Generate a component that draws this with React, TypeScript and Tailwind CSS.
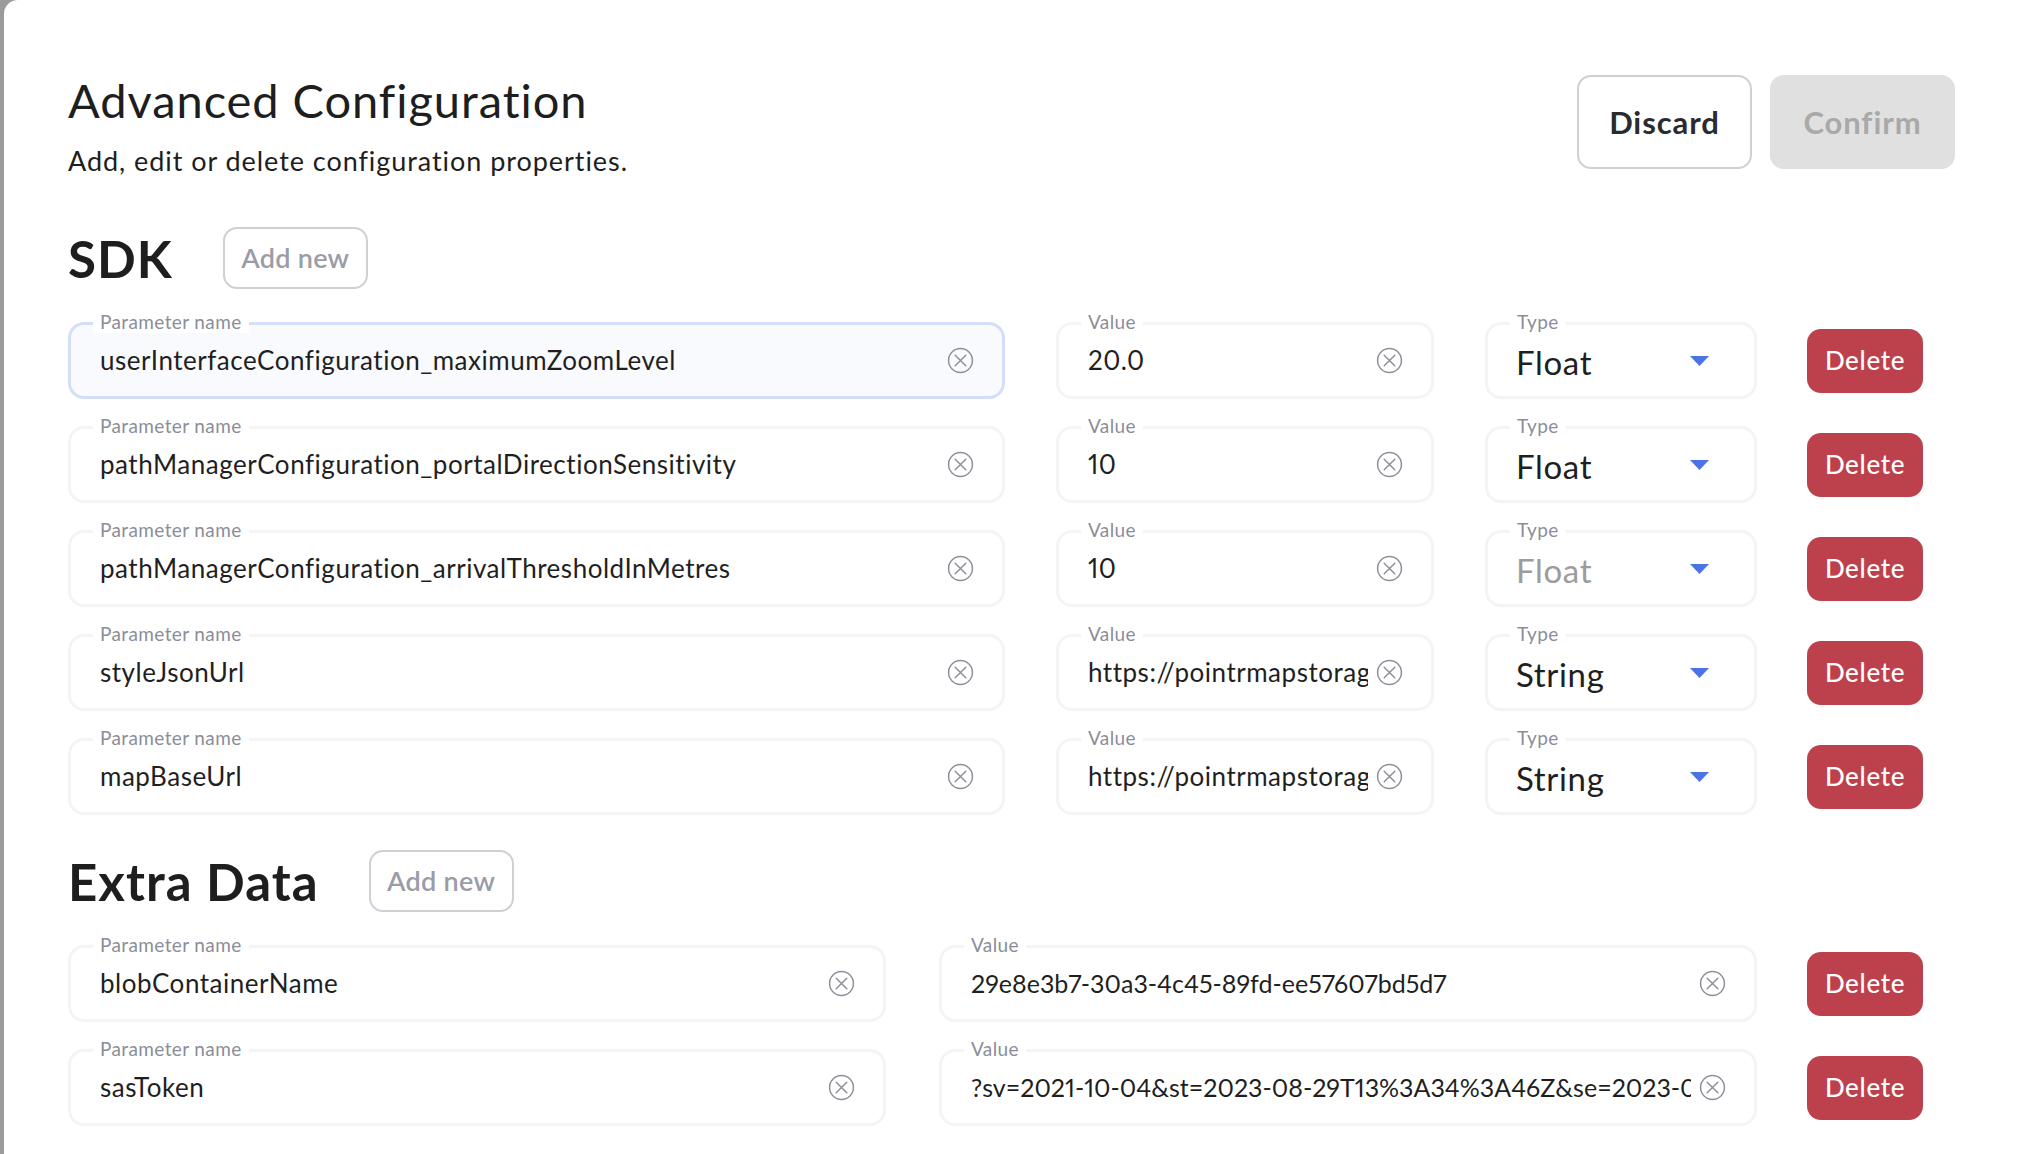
import React from 'react';

const sdkRows = [
  { name: 'userInterfaceConfiguration_maximumZoomLevel', value: '20.0', type: 'Float', focused: true },
  { name: 'pathManagerConfiguration_portalDirectionSensitivity', value: '10', type: 'Float' },
  { name: 'pathManagerConfiguration_arrivalThresholdInMetres', value: '10', type: 'Float', disabled: true },
  { name: 'styleJsonUrl', value: 'https://pointrmapstorage.blob.core.windows.net/styles/style.json', type: 'String' },
  { name: 'mapBaseUrl', value: 'https://pointrmapstorage.blob.core.windows.net/maps/', type: 'String' },
];

const extraRows = [
  { name: 'blobContainerName', value: '29e8e3b7-30a3-4c45-89fd-ee57607bd5d7' },
  {
    name: 'sasToken',
    value: '?sv=2021-10-04&st=2023-08-29T13%3A34%3A46Z&se=2023-08-30T13%3A34%3A46Z&sr=c&sp=rl',
  },
];

function ClearIcon() {
  return (
    <svg width="27" height="27" viewBox="0 0 24 24" fill="none" stroke="#8d8e99" strokeWidth="1.3" strokeLinecap="round" className="shrink-0">
      <circle cx="12" cy="12" r="10.6" />
      <path d="M7.3 7.3l9.4 9.4M16.7 7.3l-9.4 9.4" />
    </svg>
  );
}

function FloatingLabel({ children }: { children: React.ReactNode }) {
  return (
    <span className="absolute left-[22px] -top-[15px] bg-white px-[7px] text-[19px] leading-[23px] tracking-[0.02em] text-[#8b8d99]">
      {children}
    </span>
  );
}

function Field({
  label,
  value,
  focused,
  width,
  textClass = 'text-[26px] tracking-[0.02em]',
}: {
  label: string;
  value: string;
  focused?: boolean;
  width: string;
  textClass?: string;
}) {
  return (
    <div
      className={`relative h-[77px] ${width} shrink-0 rounded-[16px] border-[3px] flex items-center pl-[29px] pr-[28px] gap-[8px] ${
        focused ? 'border-[#d3def8] bg-[#f9fafe]' : 'border-[#f4f4f5] bg-white'
      }`}
    >
      <FloatingLabel>{label}</FloatingLabel>
      <div className={`flex-1 min-w-0 overflow-hidden whitespace-nowrap proportional-nums text-[#1f1f1f] ${textClass}`}>
        {value}
      </div>
      <ClearIcon />
    </div>
  );
}

function TypeSelect({ value, disabled }: { value: string; disabled?: boolean }) {
  return (
    <div className="relative h-[77px] w-[272px] shrink-0 rounded-[16px] border-[3px] border-[#f4f4f5] bg-white flex items-center pl-[28px] pr-[45px]">
      <FloatingLabel>Type</FloatingLabel>
      <div className={`flex-1 pt-[4px] text-[33px] tracking-[0.02em] ${disabled ? 'text-[#9c9c9c]' : 'text-[#1f1f1f]'}`}>
        {value}
      </div>
      <svg width="19" height="10" viewBox="0 0 19 10" className="shrink-0">
        <path d="M0 0h19L9.5 10z" fill="#4a74e6" />
      </svg>
    </div>
  );
}

function DeleteButton() {
  return (
    <button className="ml-[50px] h-[64px] w-[116px] shrink-0 rounded-[14px] bg-[#bd414c] text-[26px] font-medium tracking-[0.025em] text-white">
      Delete
    </button>
  );
}

function SectionHeader({ title }: { title: string }) {
  return (
    <div className="flex items-center gap-[50px] h-[62px]">
      <h2 className="text-[51px] font-bold tracking-[0.02em] text-[#1e1e1e] leading-none">{title}</h2>
      <button className="h-[62px] w-[145px] rounded-[14px] border-2 border-[#cfd0d6] text-[27px] font-semibold tracking-[0.01em] text-[#9a9ca8]">
        Add new
      </button>
    </div>
  );
}

export default function App() {
  return (
    <div className="min-h-[1154px] bg-[#9b9b9b] pl-[4px]" style={{ fontFamily: 'Lato, "Open Sans", sans-serif' }}>
      <div className="min-h-[1154px] bg-white rounded-tl-[14px] pt-[72px] pl-[64px] pr-[65px]">
        <div className="flex items-start justify-between">
          <div>
            <h1 className="text-[47px] leading-[56px] tracking-[0.02em] text-[#1e1e1e]">Advanced Configuration</h1>
            <p className="mt-[16px] text-[27px] leading-[34px] tracking-[0.035em] text-[#1e1e1e]">
              Add, edit or delete configuration properties.
            </p>
          </div>
          <div className="mt-[3px] flex gap-[18px]">
            <button className="h-[94px] w-[175px] rounded-[14px] border-2 border-[#cfd0d6] text-[31px] font-bold tracking-[0.03em] text-[#2a2a31]">
              Discard
            </button>
            <button className="h-[94px] w-[185px] rounded-[14px] bg-[#e0e0e0] text-[31px] font-bold tracking-[0.03em] text-[#a9a9a9]">
              Confirm
            </button>
          </div>
        </div>

        <div className="mt-[49px]">
          <SectionHeader title="SDK" />
        </div>
        <div className="mt-[33px] flex flex-col gap-[27px]">
          {sdkRows.map((r) => (
            <div key={r.name} className="flex items-center">
              <Field label="Parameter name" value={r.name} focused={r.focused} width="w-[937px]" />
              <div className="ml-[51px]">
                <Field label="Value" value={r.value} width="w-[378px]" />
              </div>
              <div className="ml-[51px]">
                <TypeSelect value={r.type} disabled={r.disabled} />
              </div>
              <DeleteButton />
            </div>
          ))}
        </div>

        <div className="mt-[35px]">
          <SectionHeader title="Extra Data" />
        </div>
        <div className="mt-[33px] flex flex-col gap-[27px]">
          {extraRows.map((r) => (
            <div key={r.name} className="flex items-center">
              <Field label="Parameter name" value={r.name} width="w-[818px]" />
              <div className="ml-[53px]">
                <Field label="Value" value={r.value} width="w-[818px]" textClass="text-[25px] tracking-normal" />
              </div>
              <DeleteButton />
            </div>
          ))}
        </div>
      </div>
    </div>
  );
}
